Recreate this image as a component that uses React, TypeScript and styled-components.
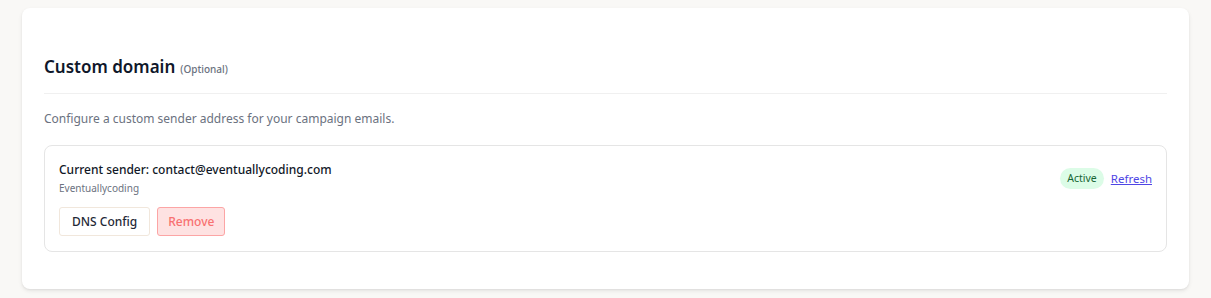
import styled, { createGlobalStyle } from "styled-components";

const GlobalStyle = createGlobalStyle`
    body {
        margin: 0;
        background: #f9f8f6;
        font-family: "Noto Sans", "Open Sans", sans-serif;
    }
`

const Page = styled.div`
    padding: 8px 22px 10px 22px;
`

const Card = styled.section`
    background: #fff;
    border-radius: 8px;
    box-shadow: 0 2px 4px rgba(0, 0, 0, 0.08), 0 1px 2px rgba(0, 0, 0, 0.05);
    padding: 45px 22px 37px;
`

const Header = styled.header`
    display: flex;
    align-items: baseline;
    gap: 5px;
    padding-bottom: 12px;
    border-bottom: 1px solid #f0f0f0;
`

const Title = styled.h2`
    margin: 0;
    font-size: 17px;
    line-height: 28px;
    font-weight: 600;
    color: #0f172a;
`

const Optional = styled.span`
    font-size: 10px;
    font-weight: 500;
    color: #6b7280;
`

const Description = styled.p`
    margin: 15px 0 16px;
    font-size: 12px;
    line-height: 20px;
    color: #6b7280;
`

const SenderBox = styled.div`
    border: 1px solid #e5e5e5;
    border-radius: 8px;
    padding: 14px 14px 15px;
`

const SenderRow = styled.div`
    display: flex;
    align-items: center;
    justify-content: space-between;
`

const SenderName = styled.div`
    font-size: 12px;
    line-height: 20px;
    font-weight: 500;
    color: #111827;
`

const SenderSub = styled.div`
    font-size: 10px;
    line-height: 16px;
    color: #6b7280;
`

const Status = styled.div`
    display: flex;
    align-items: center;
    gap: 7px;
`

const Badge = styled.span`
    background: #dcfce7;
    color: #166534;
    font-size: 10.5px;
    line-height: 21px;
    padding: 0 7px;
    border-radius: 999px;
`

const LinkButton = styled.a`
    color: #4f46e5;
    font-size: 11.5px;
    text-decoration: underline;
    cursor: pointer;
`

const Actions = styled.div`
    display: flex;
    gap: 7px;
    margin-top: 11px;
`

const Button = styled.button<{ danger?: boolean }>`
    font-family: inherit;
    height: 29px;
    padding: 0 ${p => p.danger ? '10px' : '12px'};
    font-size: 12px;
    font-weight: 500;
    border-radius: 3px;
    cursor: pointer;
    background: ${p => p.danger ? '#fee2e2' : '#fff'};
    border: 1px solid ${p => p.danger ? '#fca5a5' : '#f1e7dc'};
    color: ${p => p.danger ? '#f87171' : '#1f2937'};
`

export default function App() {
    return (
        <>
            <GlobalStyle />
            <Page>
                <Card>
                    <Header>
                        <Title>Custom domain</Title>
                        <Optional>(Optional)</Optional>
                    </Header>
                    <Description>Configure a custom sender address for your campaign emails.</Description>
                    <SenderBox>
                        <SenderRow>
                            <div>
                                <SenderName>Current sender: contact@eventuallycoding.com</SenderName>
                                <SenderSub>Eventuallycoding</SenderSub>
                            </div>
                            <Status>
                                <Badge>Active</Badge>
                                <LinkButton>Refresh</LinkButton>
                            </Status>
                        </SenderRow>
                        <Actions>
                            <Button>DNS Config</Button>
                            <Button danger>Remove</Button>
                        </Actions>
                    </SenderBox>
                </Card>
            </Page>
        </>
    )
}
